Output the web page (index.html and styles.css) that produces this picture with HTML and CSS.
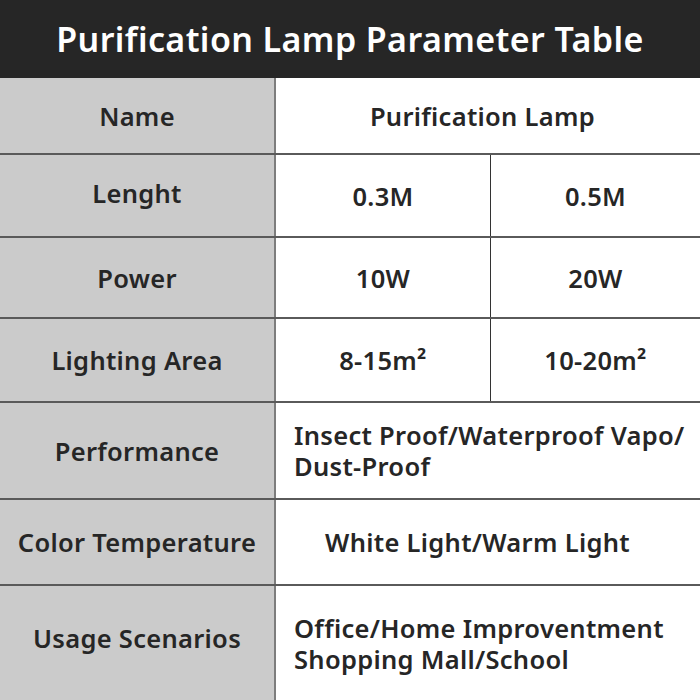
FILE: index.html
```html
<!DOCTYPE html>
<html>
<head>
<meta charset="utf-8">
<link rel="stylesheet" href="styles.css">
</head>
<body>
<div class="page">
  <div class="title">Purification Lamp Parameter Table</div>
  <div class="row r1">
    <div class="label">Name</div>
    <div class="val span">Purification Lamp</div>
  </div>
  <div class="row r2">
    <div class="label">Lenght</div>
    <div class="val half">0.3M</div>
    <div class="val">0.5M</div>
  </div>
  <div class="row r3">
    <div class="label">Power</div>
    <div class="val half">10W</div>
    <div class="val">20W</div>
  </div>
  <div class="row r4">
    <div class="label">Lighting Area</div>
    <div class="val half">8-15m²</div>
    <div class="val">10-20m²</div>
  </div>
  <div class="row r5">
    <div class="label">Performance</div>
    <div class="val span left">Insect Proof/Waterproof Vapo/<br>Dust-Proof</div>
  </div>
  <div class="row r6">
    <div class="label">Color Temperature</div>
    <div class="val span">White Light/Warm Light</div>
  </div>
  <div class="row r7">
    <div class="label">Usage Scenarios</div>
    <div class="val span left">Office/Home Improventment<br>Shopping Mall/School</div>
  </div>
</div>
</body>
</html>
```
FILE: styles.css
```css
html, body {
  margin: 0;
  padding: 0;
  background: #ffffff;
}
.page {
  width: 700px;
  height: 700px;
  overflow: hidden;
  font-family: "Noto Sans", "Open Sans", sans-serif;
  font-weight: 600;
  color: #262626;
  letter-spacing: 0.3px;
}
.title {
  height: 78px;
  background: #262626;
  color: #ffffff;
  font-size: 34px;
  font-weight: 600;
  letter-spacing: 0.4px;
  display: flex;
  align-items: center;
  justify-content: center;
}
.row {
  display: grid;
  grid-template-columns: 276px 215px 1fr;
  border-bottom: 2px solid #5a5a5a;
  box-sizing: border-box;
}
.r1 { height: 77px; }
.r2 { height: 83px; }
.r3 { height: 81px; }
.r4 { height: 84px; }
.r5 { height: 97px; }
.r6 { height: 86px; }
.r7 { height: 115px; border-bottom: none; }
.label {
  background: #cbcbcb;
  border-right: 2px solid #7d7d7d;
  display: flex;
  align-items: center;
  justify-content: center;
  font-size: 25.5px;
}
.r2 .label { padding-bottom: 5px; }
.val {
  display: flex;
  align-items: center;
  justify-content: center;
  font-size: 25.5px;
}
.half {
  border-right: 1px solid #333;
}
.span {
  grid-column: 2 / 4;
}
.r1 .val { padding-right: 11px; padding-top: 1px; }
.r6 .val { padding-right: 21px; }
.left {
  justify-content: flex-start;
  padding-left: 18px;
  line-height: 31px;
}
.r7 .label { padding-bottom: 12px; }
```
